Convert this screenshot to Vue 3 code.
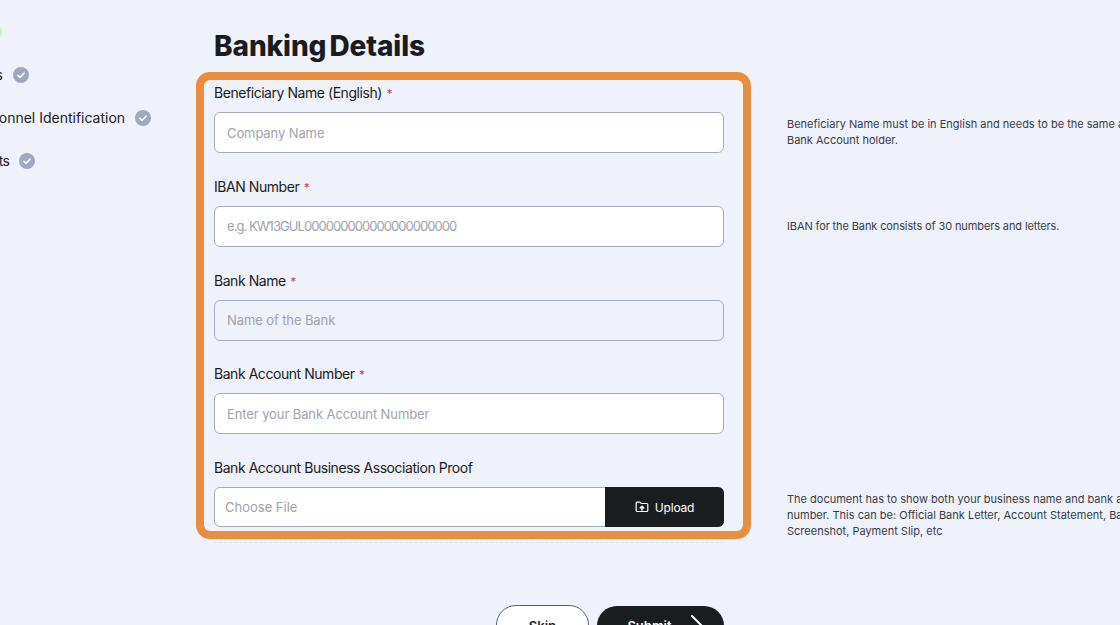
<template>
  <div class="page">
    <aside class="steps">
      <div v-for="step in steps" :key="step.label" class="step" :class="{ tight: step.tight }">
        <span class="step-label">{{ step.label }}</span>
        <span v-if="step.active" class="dot"></span>
        <svg v-else class="check" width="16" height="16" viewBox="0 0 16 16">
          <circle cx="8" cy="8" r="8" fill="#a1a7bf" />
          <path d="M5 8.300l2.100 2L11 6.200" fill="none" stroke="#fff" stroke-width="1.600" stroke-linecap="round" stroke-linejoin="round" />
        </svg>
      </div>
    </aside>

    <main class="content">
      <h1 class="title">Banking Details</h1>
      <div class="form-row">
        <form class="form" @submit.prevent>
          <div v-for="field in fields" :key="field.label" class="field">
            <label class="label">{{ field.label }} <span class="req">*</span></label>
            <input class="input" :class="[field.kind]" :placeholder="field.placeholder" />
          </div>
          <div class="field">
            <label class="label">Bank Account Business Association Proof</label>
            <div class="file">
              <span class="file-name">Choose File</span>
              <button class="upload" type="button">
                <svg width="14" height="14" viewBox="0 0 14 14" fill="none" stroke="#fff" stroke-width="1.200" stroke-linejoin="round" stroke-linecap="round">
                  <path d="M1.200 3.200c0-.6.4-1 1-1h2.900l1.200 1.300h5.500c.6 0 1 .4 1 1v6c0 .6-.4 1-1 1H2.200c-.6 0-1-.4-1-1z" />
                  <path d="M7 9.900V6.300M5.300 7.900L7 6.200l1.700 1.700" stroke-width="1.500" />
                </svg>
                Upload
              </button>
            </div>
          </div>
          <div class="divider"></div>
          <div class="actions">
            <button class="skip" type="button">Skip</button>
            <button class="submit" type="submit">
              Submit
              <svg width="14" height="24" viewBox="0 0 14 24" fill="none" stroke="#fff" stroke-width="2" stroke-linecap="round" stroke-linejoin="round">
                <path d="M2 2l10 10L2 22" />
              </svg>
            </button>
          </div>
          <div class="highlight"></div>
        </form>

        <div class="notes">
          <p class="note note-name">Beneficiary Name must be in English and needs to be the same as the<br />Bank Account holder.</p>
          <p class="note note-iban">IBAN for the Bank consists of 30 numbers and letters.</p>
          <p class="note note-proof">The document has to show both your business name and bank account<br />number. This can be: Official Bank Letter, Account Statement, Bank App<br />Screenshot, Payment Slip, etc</p>
        </div>
      </div>
    </main>
  </div>
</template>

<script setup>
const steps = [
  { label: 'Basic', active: true },
  { label: 'Branches' },
  { label: 'Key Personnel Identification' },
  { label: 'Documents', tight: true },
]

const fields = [
  { label: 'Beneficiary Name (English)', placeholder: 'Company Name' },
  { label: 'IBAN Number', placeholder: 'e.g. KW13GUL000000000000000000000', kind: 'iban' },
  { label: 'Bank Name', placeholder: 'Name of the Bank', kind: 'filled' },
  { label: 'Bank Account Number', placeholder: 'Enter your Bank Account Number' },
]
</script>

<style scoped>
.page {
  display: flex;
  width: 1120px;
  height: 625px;
  overflow: hidden;
  background: #eff2fb;
  color: #1b1c20;
  font-family: Inter, "Liberation Sans", sans-serif;
}

.steps {
  flex: none;
  display: flex;
  flex-direction: column;
  gap: 24px;
  width: 273.5px;
  margin-left: -59.5px;
  padding-top: 22px;
}

.step {
  display: flex;
  align-items: center;
  gap: 10px;
  height: 19px;
  font-size: 14px;
  white-space: nowrap;
}

.step.tight .step-label {
  letter-spacing: -0.75px;
}

.dot {
  width: 14px;
  height: 14px;
  border-radius: 50%;
  background: #63c94a;
  box-shadow: 0 0 0 2px #c9ecc0;
}

.content {
  flex: none;
  padding-top: 28px;
}

.title {
  margin: 0;
  font-size: 28px;
  line-height: 36px;
  font-weight: 800;
  letter-spacing: -0.1px;
  word-spacing: -3px;
}

.form-row {
  display: flex;
  gap: 63px;
  margin-top: 20px;
}

.form {
  position: relative;
  width: 510px;
}

.field {
  display: flex;
  flex-direction: column;
  gap: 10px;
  margin-bottom: 24.75px;
}

.label {
  font-size: 14px;
  line-height: 18px;
  letter-spacing: -0.45px;
}

.req {
  margin-left: 1px;
  font-size: 12px;
  line-height: 0;
  color: #b0525a;
}

.input {
  box-sizing: border-box;
  height: 41px;
  padding: 0 12px;
  background: #fff;
  border: 1px solid #a6abbb;
  border-radius: 6px;
  font: 13px Inter, "Liberation Sans", sans-serif;
  letter-spacing: -0.1px;
}

.input::placeholder,
.file-name {
  color: #a0a3ac;
  opacity: 1;
}

.input.iban {
  letter-spacing: -0.95px;
}

.input.filled {
  background: #eff2f9;
  border-color: #a5adc4;
}

.file {
  display: flex;
  height: 40px;
  box-sizing: border-box;
  background: #fff;
  border: 1px solid #a6abbb;
  border-radius: 6px;
}

.file-name {
  flex: 1;
  align-self: center;
  padding-left: 10px;
  font-size: 13px;
}

.upload {
  display: flex;
  align-items: center;
  justify-content: center;
  gap: 6px;
  width: 119px;
  margin: -1px;
  background: #1b1c20;
  color: #fff;
  border: 0;
  border-radius: 0 6px 6px 0;
  font: 12px Inter, "Liberation Sans", sans-serif;
  letter-spacing: -0.2px;
}

.divider {
  margin-top: -10px;
  border-top: 1px dashed #e2e5ee;
}

.actions {
  display: flex;
  align-items: flex-start;
  justify-content: flex-end;
  gap: 8px;
  margin-top: 62px;
}

.skip,
.submit {
  border-radius: 20px;
  font: 600 13px Inter, "Liberation Sans", sans-serif;
}

.skip {
  width: 93px;
  height: 42px;
  background: #fff;
  border: 1px solid #5e6068;
  color: #1b1c20;
}

.submit {
  display: flex;
  align-items: center;
  justify-content: center;
  gap: 18px;
  width: 127px;
  height: 40px;
  margin-top: 1px;
  padding: 0 0 0 10px;
  background: #1b1c20;
  border: 0;
  color: #fff;
}

.highlight {
  position: absolute;
  top: -12px;
  left: -18px;
  width: 555px;
  height: 467px;
  box-sizing: border-box;
  border: 8px solid #e98e3f;
  border-radius: 14px;
  pointer-events: none;
}

.notes {
  flex: none;
  width: 400px;
  font-size: 11px;
  line-height: 16px;
  color: #3a3c44;
  white-space: nowrap;
}

.note {
  margin: 0;
}

.note-name {
  margin-top: 32px;
}

.note-iban {
  margin-top: 70px;
  letter-spacing: -0.12px;
}

.note-proof {
  margin-top: 257px;
}
</style>

<style>
html,
body {
  margin: 0;
  background: #eff2fb;
}
</style>
